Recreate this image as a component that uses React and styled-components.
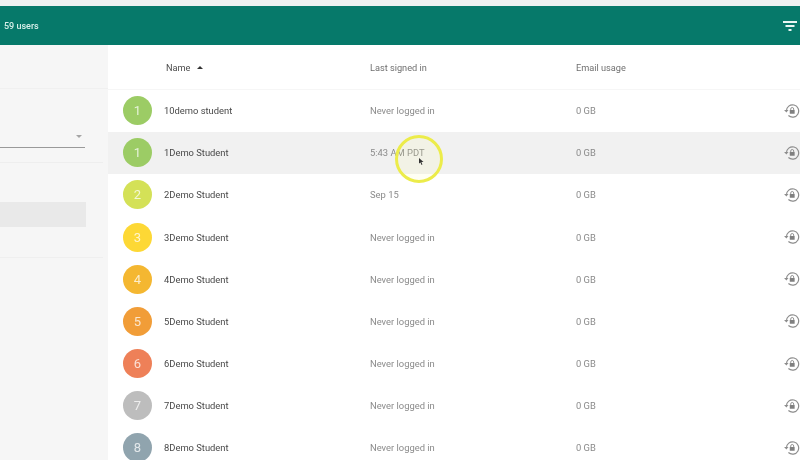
import React from "react";
import styled, { createGlobalStyle } from "styled-components";

const Global = createGlobalStyle`
  html, body { margin: 0; padding: 0; width: 800px; height: 460px; overflow: hidden; background: #fff; }
  body { font-family: Roboto, "Liberation Sans", sans-serif; }
`;

const Page = styled.div`
  position: relative;
  width: 800px;
  height: 460px;
  overflow: hidden;
  display: flex;
  flex-direction: column;
  background: #fff;
  filter: blur(0.6px);
`;
const TopStrip = styled.div`
  height: 6px;
  flex: none;
  background: #eef1f1;
`;
const AppBar = styled.header`
  height: 39px;
  flex: none;
  background: #06796a;
  color: #d8f0ea;
  display: flex;
  align-items: center;
  justify-content: space-between;
  padding: 0 3px 0 4px;
  font-size: 9px;
  font-weight: 500;
`;
const Body = styled.div`
  flex: 1;
  display: flex;
  min-height: 0;
`;
const Sidebar = styled.aside`
  width: 108px;
  flex: none;
  background: #f6f6f6;
  display: flex;
  flex-direction: column;
`;
const SideHeader = styled.div`
  height: 44px;
  flex: none;
  border-bottom: 1px solid #f0f0f0;
  box-sizing: border-box;
`;
const SelectSection = styled.div`
  height: 74px;
  flex: none;
  box-sizing: border-box;
  border-bottom: 1px solid #eeeeee;
  margin-right: 5px;
  padding-top: 39px;
`;
const SelectBox = styled.div`
  width: 85px;
  height: 20px;
  box-sizing: border-box;
  border-bottom: 1px solid #9a9a9a;
  display: flex;
  justify-content: flex-end;
  align-items: center;
  padding: 0 3px 3px 0;
`;
const Caret = styled.span`
  width: 0;
  height: 0;
  border-left: 3px solid transparent;
  border-right: 3px solid transparent;
  border-top: 3px solid #a5a5a5;
`;
const NavSection = styled.div`
  height: 95px;
  flex: none;
  box-sizing: border-box;
  border-bottom: 1px solid #efefef;
  margin-right: 5px;
  padding-top: 39px;
`;
const ActiveItem = styled.div`
  width: 86px;
  height: 25px;
  background: #e9e9e9;
`;
const Main = styled.main`
  flex: 1;
  min-width: 0;
  display: flex;
  flex-direction: column;
`;
const HeadRow = styled.div`
  height: 44.6px;
  flex: none;
  display: grid;
  grid-template-columns: 58px 204px 206px 1fr;
  align-items: center;
  font-size: 9.2px;
  color: #707070;
  border-bottom: 1px solid #f6f6f6;
  box-sizing: border-box;
  padding-top: 1px;
`;
const HeadName = styled.div`
  grid-column: 2;
  color: #4c4c4c;
  display: flex;
  align-items: center;
  gap: 7px;
`;
const SortArrow = styled.span`
  width: 0;
  height: 0;
  border-left: 3px solid transparent;
  border-right: 3px solid transparent;
  border-bottom: 3px solid #333;
`;
const Row = styled.div`
  height: 42.15px;
  flex: none;
  display: grid;
  grid-template-columns: 56px 206px 206px 1fr 17px;
  align-items: center;
  background: ${(p) => (p.$active ? "#f1f1f1" : "#fff")};
  font-size: 9.4px;
  color: #8a8a8a;
`;
const Avatar = styled.div`
  width: 29px;
  height: 29px;
  margin-left: 15px;
  border-radius: 50%;
  background: ${(p) => p.$color};
  color: rgba(255, 255, 255, 0.75);
  display: flex;
  align-items: center;
  justify-content: center;
  font-size: 13px;
`;
const Name = styled.div`
  color: #484848;
`;
const ResetIcon = styled.svg`
  width: 18px;
  height: 18px;
  display: block;
`;
const Highlight = styled.div`
  position: absolute;
  left: 395px;
  top: 135px;
  width: 48px;
  height: 48px;
  box-sizing: border-box;
  border: 3px solid #ecec4a;
  border-radius: 50%;
  background: rgba(255, 255, 160, 0.12);
`;
const Cursor = styled.svg`
  position: absolute;
  left: 419px;
  top: 158px;
  width: 5px;
  height: 7px;
`;

const FilterIcon = () => (
  <svg width="14" height="12" viewBox="0 0 14 12" fill="#e8f6f3">
    <rect x="0" y="1" width="14" height="2" />
    <rect x="2.5" y="5" width="9" height="2" />
    <rect x="5.5" y="9" width="3" height="2" />
  </svg>
);

const Reset = () => (
  <ResetIcon viewBox="0 0 17 17" fill="none">
    <path d="M3.2 8.5a5.8 5.8 0 1 1 1.9 4.3" stroke="#8c8c8c" strokeWidth="1.1" />
    <path d="M1 7.5h4.2L3.2 10z" fill="#8c8c8c" />
    <rect x="6.4" y="7.6" width="4.6" height="3.6" rx="0.4" fill="#808080" />
    <path d="M7.3 7.6V6.6a1.4 1.4 0 0 1 2.8 0v1" stroke="#808080" strokeWidth="0.8" />
  </ResetIcon>
);

const users = [
  ["1", "10demo student", "Never logged in", "#9ccc65"],
  ["1", "1Demo Student", "5:43 AM PDT", "#9ccc65", true],
  ["2", "2Demo Student", "Sep 15", "#d4e157"],
  ["3", "3Demo Student", "Never logged in", "#fdd835"],
  ["4", "4Demo Student", "Never logged in", "#f4b731"],
  ["5", "5Demo Student", "Never logged in", "#f19d38"],
  ["6", "6Demo Student", "Never logged in", "#ee8058"],
  ["7", "7Demo Student", "Never logged in", "#bdbdbd"],
  ["8", "8Demo Student", "Never logged in", "#90a4ae"],
];

export default function App() {
  return (
    <>
      <Global />
      <Page>
        <TopStrip />
        <AppBar>
          <span>59 users</span>
          <FilterIcon />
        </AppBar>
        <Body>
          <Sidebar>
            <SideHeader />
            <SelectSection>
              <SelectBox>
                <Caret />
              </SelectBox>
            </SelectSection>
            <NavSection>
              <ActiveItem />
            </NavSection>
          </Sidebar>
          <Main>
            <HeadRow>
              <HeadName>
                Name <SortArrow />
              </HeadName>
              <div>Last signed in</div>
              <div>Email usage</div>
            </HeadRow>
            {users.map(([n, name, last, color, active]) => (
              <Row key={name} $active={active}>
                <Avatar $color={color}>{n}</Avatar>
                <Name>{name}</Name>
                <div>{last}</div>
                <div>0 GB</div>
                <Reset />
              </Row>
            ))}
          </Main>
        </Body>
        <Highlight />
        <Cursor viewBox="0 0 5 7">
          <path d="M0 0l4.5 4H2.4l1 2.6-.9.4-1-2.6L0 5.6z" fill="#333" />
        </Cursor>
      </Page>
    </>
  );
}
